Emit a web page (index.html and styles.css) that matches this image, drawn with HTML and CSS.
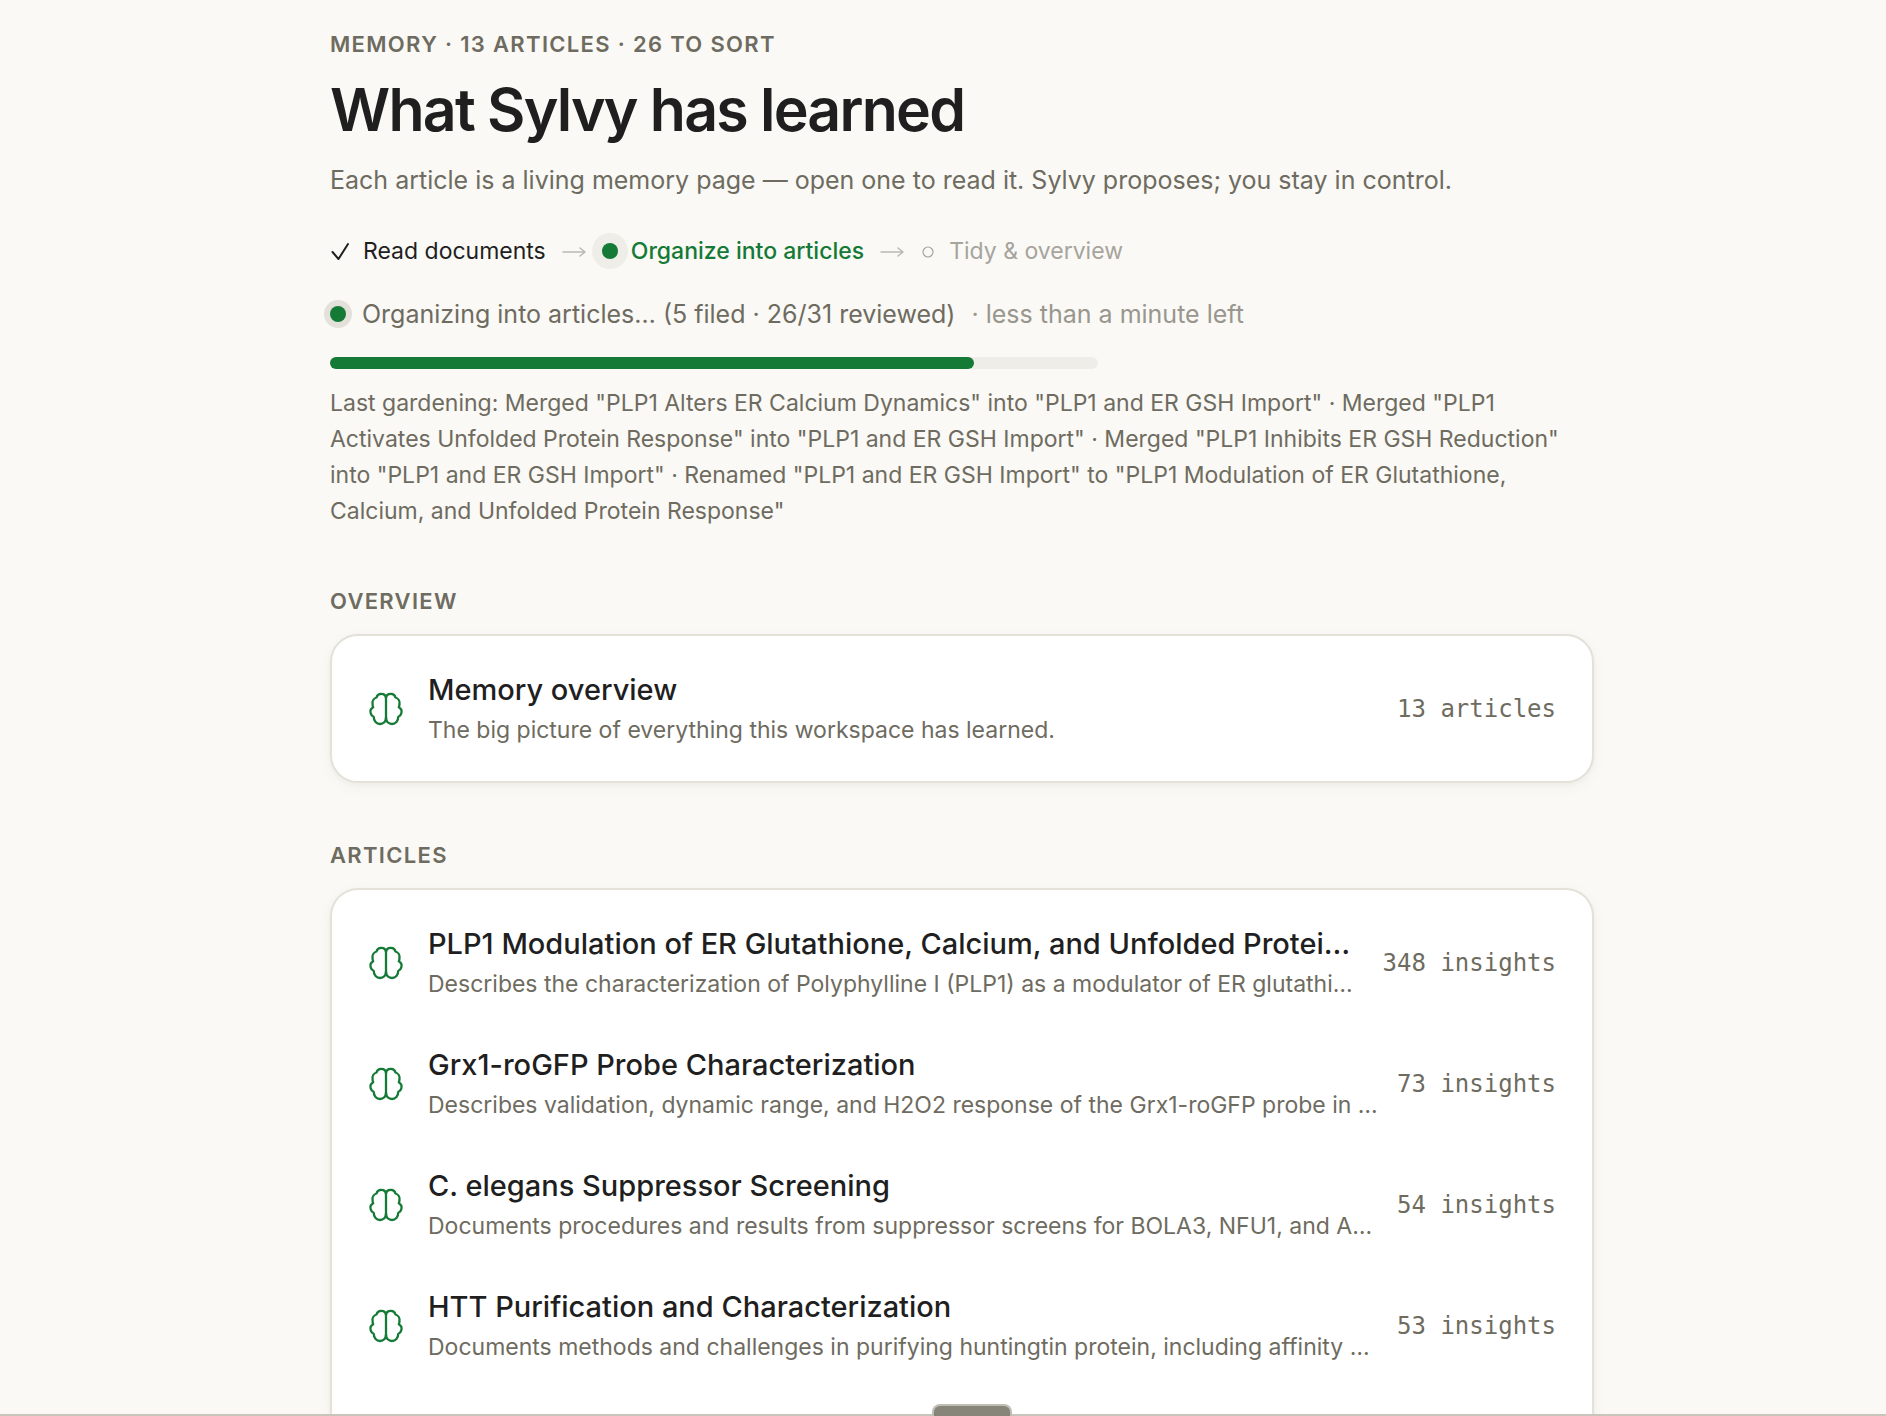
FILE: index.html
```html
<!DOCTYPE html>
<html lang="en">
<head>
    <meta charset="UTF-8">
    <meta name="viewport" content="width=device-width, initial-scale=1.0">
    <title>Memory - Sylvy</title>
    <link rel="stylesheet" href="styles.css">
</head>
<body>
    <svg class="sprite" aria-hidden="true">
        <symbol id="brain" viewBox="0 0 36 36">
            <path d="M18 6.5C17.4 4 15.2 2.8 13 2.9C10.7 3 9 4.5 8.5 6.5C5.7 7.3 4 10.2 4.6 13.2C4.5 14.3 4.7 15.3 5.2 16.2C2.8 17.5 2 20 2.7 22.3C3.2 24 4.3 25.3 5.8 26C5.7 30 8.5 33 12 33C15.5 33 18 30.3 18 27"/>
            <path d="M18 6.5C18.6 4 20.8 2.8 23 2.9C25.3 3 27 4.5 27.5 6.5C30.3 7.3 32 10.2 31.4 13.2C31.5 14.3 31.3 15.3 30.8 16.2C33.2 17.5 34 20 33.3 22.3C32.8 24 31.7 25.3 30.2 26C30.3 30 27.5 33 24 33C20.5 33 18 30.3 18 27"/>
            <path d="M18 5v25"/>
        </symbol>
        <symbol id="arrow" viewBox="0 0 24 20">
            <path d="M1 11h22M18 7l5 4-5 4"/>
        </symbol>
    </svg>

    <main class="page">
        <header>
            <p class="label">Memory · 13 articles · 26 to sort</p>
            <h1>What Sylvy has learned</h1>
            <p class="subtitle">Each article is a living memory page — open one to read it. Sylvy proposes; you stay in control.</p>
        </header>

        <ol class="steps">
            <li class="step done">
                <svg class="check" viewBox="0 0 20 20"><path d="M2.5 11l6 7 9.500-15"/></svg>
                Read documents
            </li>
            <li class="step-arrow"><svg><use href="#arrow"/></svg></li>
            <li class="step active">
                <span class="dot"></span>
                Organize into articles
            </li>
            <li class="step-arrow"><svg><use href="#arrow"/></svg></li>
            <li class="step pending">
                <svg class="ring" viewBox="0 0 16 16"><circle cx="8" cy="9" r="5"/></svg>
                Tidy &amp; overview
            </li>
        </ol>

        <div class="status">
            <span class="dot"></span>
            <span>Organizing into articles… (5 filed · 26/31 reviewed)</span>
            <span class="eta">· less than a minute left</span>
        </div>
        <div class="progress" role="progressbar" aria-label="Reviewed" aria-valuemin="0" aria-valuemax="31" aria-valuenow="26">
            <div class="progress-fill" style="width: 83.87%"></div>
        </div>
        <p class="note">Last gardening: Merged "PLP1 Alters ER Calcium Dynamics" into "PLP1 and ER GSH Import" · Merged "PLP1 Activates Unfolded Protein Response" into "PLP1 and ER GSH Import" · Merged "PLP1 Inhibits ER GSH Reduction" into "PLP1 and ER GSH Import" · Renamed "PLP1 and ER GSH Import" to "PLP1 Modulation of ER Glutathione, Calcium, and Unfolded Protein Response"</p>

        <h2 class="label">Overview</h2>
        <section class="card">
            <a class="row" href="#overview">
                <svg class="brain"><use href="#brain"/></svg>
                <span class="text">
                    <span class="title">Memory overview</span>
                    <span class="desc">The big picture of everything this workspace has learned.</span>
                </span>
                <span class="count">13 articles</span>
            </a>
        </section>

        <h2 class="label">Articles</h2>
        <section class="card card-list">
            <a class="row" href="#plp1">
                <svg class="brain"><use href="#brain"/></svg>
                <span class="text">
                    <span class="title">PLP1 Modulation of ER Glutathione, Calcium, and Unfolded Protei…</span>
                    <span class="desc">Describes the characterization of Polyphylline I (PLP1) as a modulator of ER glutathi…</span>
                </span>
                <span class="count">348 insights</span>
            </a>
            <a class="row" href="#grx1">
                <svg class="brain"><use href="#brain"/></svg>
                <span class="text">
                    <span class="title">Grx1-roGFP Probe Characterization</span>
                    <span class="desc">Describes validation, dynamic range, and H2O2 response of the Grx1-roGFP probe in …</span>
                </span>
                <span class="count">73 insights</span>
            </a>
            <a class="row" href="#elegans">
                <svg class="brain"><use href="#brain"/></svg>
                <span class="text">
                    <span class="title">C. elegans Suppressor Screening</span>
                    <span class="desc">Documents procedures and results from suppressor screens for BOLA3, NFU1, and A…</span>
                </span>
                <span class="count">54 insights</span>
            </a>
            <a class="row" href="#htt">
                <svg class="brain"><use href="#brain"/></svg>
                <span class="text">
                    <span class="title">HTT Purification and Characterization</span>
                    <span class="desc">Documents methods and challenges in purifying huntingtin protein, including affinity …</span>
                </span>
                <span class="count">53 insights</span>
            </a>
        </section>
    </main>

    <div class="drawer-edge"><span class="handle"></span></div>
</body>
</html>
```

FILE: styles.css
```css
:root {
    --bg: #faf9f5;
    --ink: #1f1f1f;
    --muted: #6e6b60;
    --green: #147a36;
    --border: #e3e1d8;
    --track: #eeede8;
}

* {
    box-sizing: border-box;
}

body {
    margin: 0;
    background: var(--bg);
    color: var(--ink);
    font-family: Inter, "Liberation Sans", sans-serif;
    overflow: hidden;
}

.sprite {
    display: none;
}

svg {
    fill: none;
    stroke: currentColor;
    stroke-width: 2;
    stroke-linecap: round;
    stroke-linejoin: round;
    flex-shrink: 0;
}

.page {
    display: flex;
    flex-direction: column;
    height: 100vh;
    width: calc(100% - 38px);
    max-width: 1328px;
    margin-left: max(38px, calc(50% - 645px));
    padding: 28px 32px 0;
}

.label {
    margin: 0;
    font-size: 22px;
    line-height: 32px;
    font-weight: 600;
    letter-spacing: 0.06em;
    text-transform: uppercase;
    color: var(--muted);
}

h1 {
    margin: 16px 0;
    font-size: 59px;
    line-height: 68px;
    font-weight: 600;
    letter-spacing: -0.03em;
}

.subtitle {
    margin: 0;
    font-size: 25px;
    line-height: 40px;
    color: var(--muted);
}

.steps {
    display: flex;
    align-items: center;
    gap: 16px;
    margin: 32px 0 24px;
    padding: 0;
    list-style: none;
    font-size: 23px;
    line-height: 38px;
}

.step {
    display: flex;
    align-items: center;
    gap: 13px;
}

.step-arrow {
    display: flex;
    color: #bbb9b3;
}

.step-arrow svg {
    width: 24px;
    height: 20px;
    stroke-width: 1.5;
}

.check {
    width: 20px;
    height: 20px;
}

.ring {
    width: 16px;
    height: 16px;
    stroke-width: 1.2;
}

.active {
    color: var(--green);
    font-weight: 500;
}

.pending {
    color: #a6a49d;
}

.dot {
    width: 16px;
    height: 16px;
    border-radius: 50%;
    background: var(--green);
    box-shadow: 0 0 0 6px #e3e1da;
}

.step .dot {
    box-shadow: 0 0 0 10px var(--track);
}

.status {
    display: flex;
    align-items: center;
    gap: 16px;
    font-size: 25px;
    line-height: 40px;
    color: var(--muted);
}

.eta {
    color: #98968d;
}

.progress {
    width: 100%;
    max-width: 768px;
    height: 12px;
    margin: 23px 0 16px;
    border-radius: 6px;
    background: var(--track);
    flex-shrink: 0;
}

.progress-fill {
    height: 100%;
    border-radius: 6px;
    background: var(--green);
}

.note {
    margin: 0 0 56px;
    font-size: 23px;
    line-height: 36px;
    color: var(--muted);
}

.card {
    margin: 17px 0 56px;
    padding: 12px;
    border: 2px solid var(--border);
    border-radius: 28px;
    background: #fff;
    box-shadow: 0 2px 4px rgba(60, 55, 40, 0.04), 0 4px 16px rgba(60, 55, 40, 0.04);
}

/* the list runs on below the window */
.card-list {
    flex: 1;
    margin-bottom: 0;
    border-bottom: 0;
    border-radius: 28px 28px 0 0;
}

.row {
    display: flex;
    align-items: center;
    gap: 16px;
    padding: 22px 24px;
    color: inherit;
    text-decoration: none;
}

.brain {
    width: 36px;
    height: 36px;
    margin-right: 8px;
    color: var(--green);
    stroke-width: 2.3;
}

.text {
    flex: 1;
    min-width: 0;
}

.title,
.desc {
    display: block;
    overflow: hidden;
    white-space: nowrap;
    text-overflow: ellipsis;
}

.title {
    margin-bottom: 4px;
    font-size: 29px;
    line-height: 40px;
    font-weight: 500;
}

.desc {
    font-size: 23px;
    line-height: 33px;
    color: var(--muted);
}

.count {
    font-family: "DejaVu Sans Mono", monospace;
    font-size: 24px;
    color: var(--muted);
}

.drawer-edge {
    position: fixed;
    left: 0;
    right: 0;
    bottom: 0;
    display: flex;
    justify-content: center;
    padding-left: 58px;
    border-bottom: 2px solid #c8c5bd;
}

.handle {
    width: 80px;
    height: 12px;
    margin-bottom: -2px;
    border: 2px solid #c0beb4;
    border-bottom: 0;
    border-radius: 8px 8px 0 0;
    background: #87847a;
}
```
